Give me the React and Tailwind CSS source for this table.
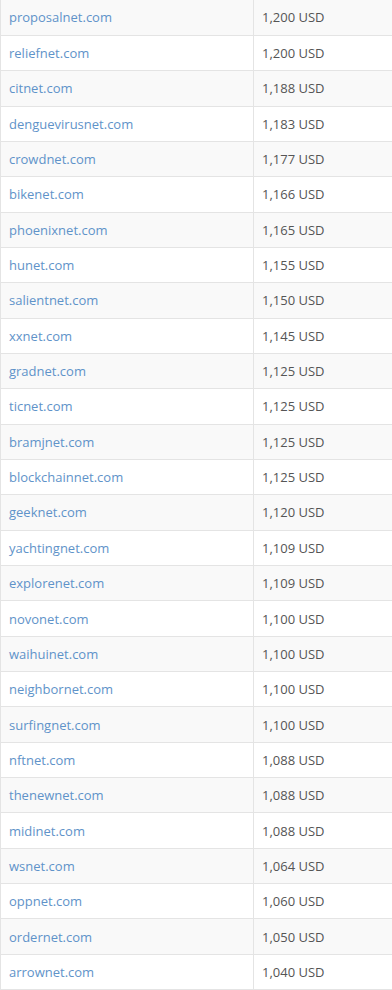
const rows = [
  ['proposalnet.com', '1,200'],
  ['reliefnet.com', '1,200'],
  ['citnet.com', '1,188'],
  ['denguevirusnet.com', '1,183'],
  ['crowdnet.com', '1,177'],
  ['bikenet.com', '1,166'],
  ['phoenixnet.com', '1,165'],
  ['hunet.com', '1,155'],
  ['salientnet.com', '1,150'],
  ['xxnet.com', '1,145'],
  ['gradnet.com', '1,125'],
  ['ticnet.com', '1,125'],
  ['bramjnet.com', '1,125'],
  ['blockchainnet.com', '1,125'],
  ['geeknet.com', '1,120'],
  ['yachtingnet.com', '1,109'],
  ['explorenet.com', '1,109'],
  ['novonet.com', '1,100'],
  ['waihuinet.com', '1,100'],
  ['neighbornet.com', '1,100'],
  ['surfingnet.com', '1,100'],
  ['nftnet.com', '1,088'],
  ['thenewnet.com', '1,088'],
  ['midinet.com', '1,088'],
  ['wsnet.com', '1,064'],
  ['oppnet.com', '1,060'],
  ['ordernet.com', '1,050'],
  ['arrownet.com', '1,040'],
];

export default function App() {
  return (
    <div className="w-[392px] bg-white font-['Open_Sans',sans-serif] text-[13px] overflow-hidden">
      <table className="w-[393px] border-collapse table-fixed">
        <colgroup>
          <col className="w-[253px]" />
          <col />
        </colgroup>
        <tbody>
          {rows.map(([name, price], i) => (
            <tr
              key={name}
              className={`h-[35.35px] ${i % 2 === 0 ? 'bg-[#f9f9f9]' : 'bg-white'}`}
            >
              <td className="border-l border-b border-r border-[#e4e4e4] pl-2 pr-2 py-0 leading-[18px]">
                <a href="#" className="text-[#5f93c9] no-underline">{name}</a>
              </td>
              <td className="border-b border-r border-[#e4e4e4] pl-2 py-0 leading-[18px] text-[#555555]">
                {price} USD
              </td>
            </tr>
          ))}
        </tbody>
      </table>
    </div>
  );
}
